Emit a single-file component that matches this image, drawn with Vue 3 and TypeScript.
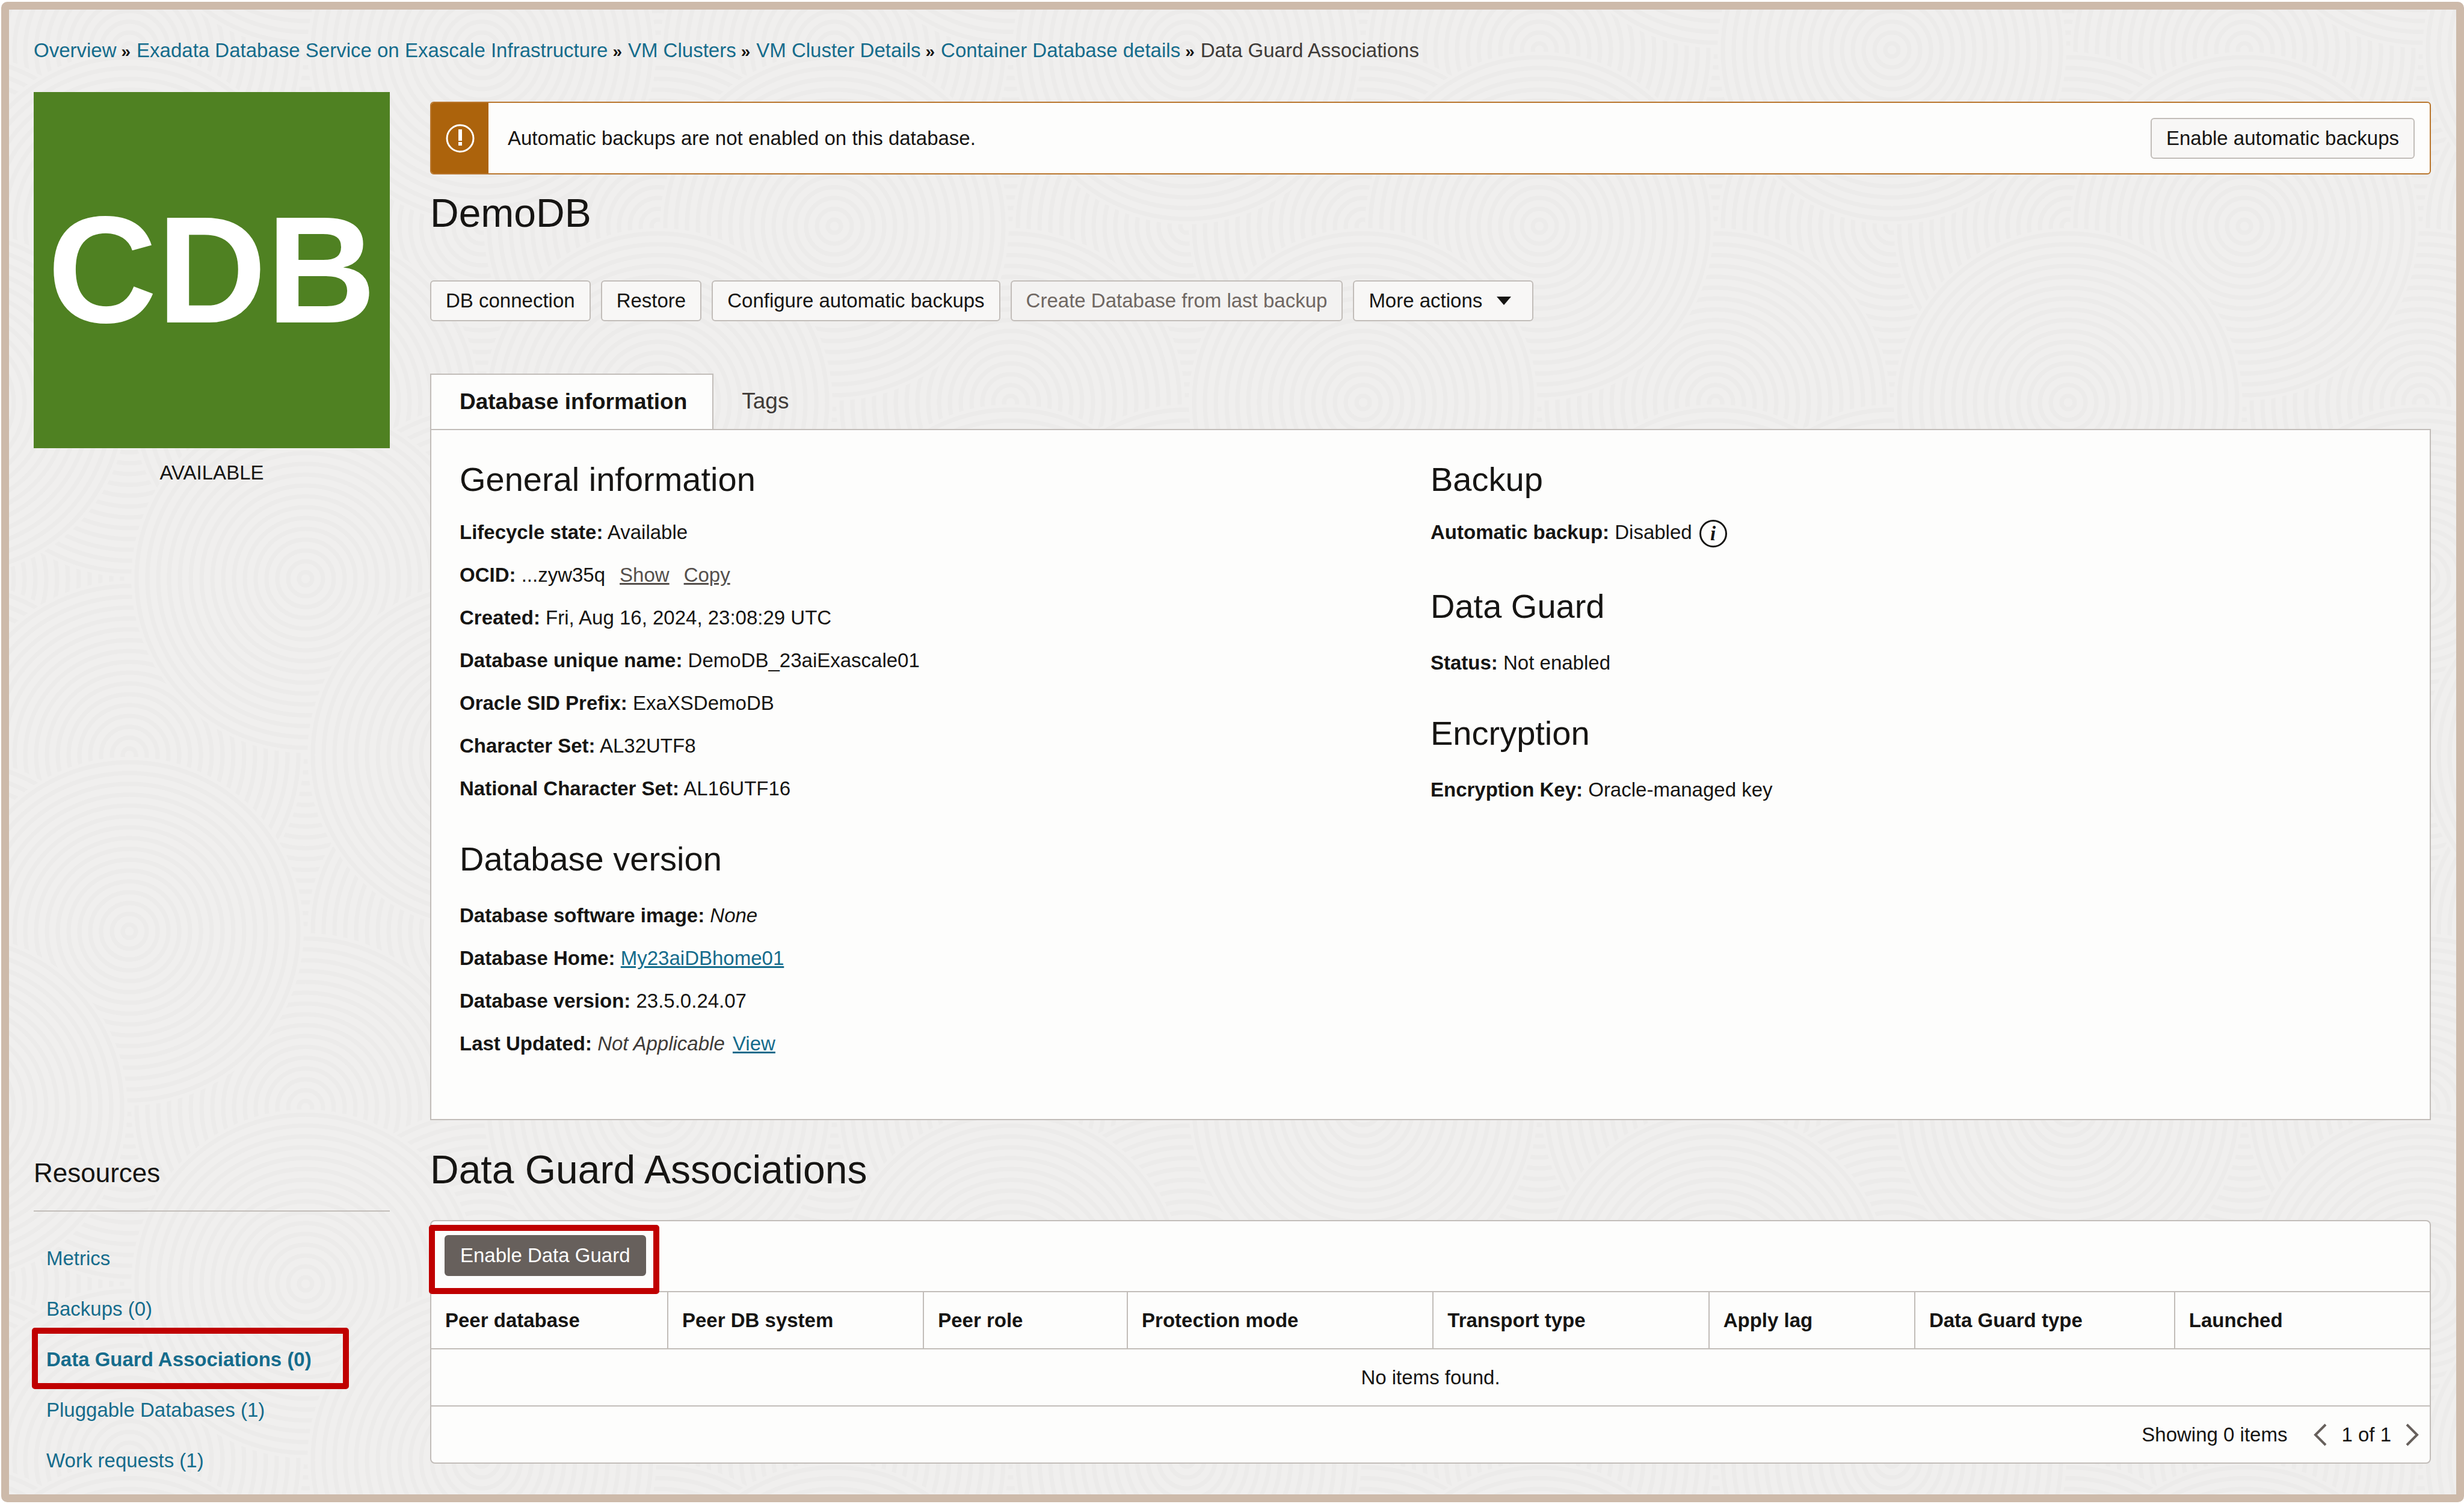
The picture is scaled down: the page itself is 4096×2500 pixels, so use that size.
<script setup lang="ts">
import { ref } from 'vue'

interface Crumb { label: string; current?: boolean }
interface Column { label: string; share: number }
interface Resource { label: string; active?: boolean }
interface Swirl { x: number; y: number }

const crumbs: Crumb[] = [
  { label: 'Overview' },
  { label: 'Exadata Database Service on Exascale Infrastructure' },
  { label: 'VM Clusters' },
  { label: 'VM Cluster Details' },
  { label: 'Container Database details' },
  { label: 'Data Guard Associations', current: true },
]

const activeTab = ref<'info' | 'tags'>('info')

const general = [
  { label: 'Created:', value: 'Fri, Aug 16, 2024, 23:08:29 UTC' },
  { label: 'Database unique name:', value: 'DemoDB_23aiExascale01' },
  { label: 'Oracle SID Prefix:', value: 'ExaXSDemoDB' },
  { label: 'Character Set:', value: 'AL32UTF8' },
  { label: 'National Character Set:', value: 'AL16UTF16' },
]

const columns: Column[] = [
  { label: 'Peer database', share: 11.8 },
  { label: 'Peer DB system', share: 12.8 },
  { label: 'Peer role', share: 10.2 },
  { label: 'Protection mode', share: 15.3 },
  { label: 'Transport type', share: 13.8 },
  { label: 'Apply lag', share: 10.3 },
  { label: 'Data Guard type', share: 13 },
  { label: 'Launched', share: 12.8 },
]

const resources: Resource[] = [
  { label: 'Metrics' },
  { label: 'Backups (0)' },
  { label: 'Data Guard Associations (0)', active: true },
  { label: 'Pluggable Databases (1)' },
  { label: 'Work requests (1)' },
]

// Page texture: a 4 x 4 grid of overlapping ringed discs, repeated as a tile.
const tile = 1172
const pitch = tile / 4
const radius = 290
const rings = Array.from({ length: 16 }, (_, i) => 11 + i * 18)
const paintOrder = [5, 12, 10, 1, 15, 6, 8, 3, 9, 0, 14, 7, 4, 13, 11, 2]
const swirls: Swirl[] = paintOrder.flatMap((cell) => {
  const cx = 200 + (cell % 4) * pitch
  const cy = 67 + Math.floor(cell / 4) * pitch
  const copies: Swirl[] = []
  for (const dx of [-tile, 0, tile]) {
    for (const dy of [-tile, 0, tile]) {
      const x = cx + dx
      const y = cy + dy
      if (x > -radius && x < tile + radius && y > -radius && y < tile + radius) copies.push({ x, y })
    }
  }
  return copies
})
</script>

<template>
  <div class="page">
    <div class="frame">
      <svg class="texture" aria-hidden="true">
        <defs>
          <g id="swirl">
            <circle :r="radius" fill="#f0efee" />
            <circle v-for="r in rings" :key="r" :r="r" fill="none" stroke="#ecebea" stroke-width="7" />
          </g>
          <pattern id="swirls" patternUnits="userSpaceOnUse" :width="tile" :height="tile">
            <use v-for="(s, i) in swirls" :key="i" href="#swirl" :x="s.x" :y="s.y" />
          </pattern>
        </defs>
        <rect width="100%" height="100%" fill="url(#swirls)" />
      </svg>

      <div class="content">
        <nav class="crumbs" aria-label="Breadcrumb">
          <template v-for="(c, i) in crumbs" :key="c.label">
            <span v-if="i > 0" class="sep">»</span>
            <span v-if="c.current" class="here">{{ c.label }}</span>
            <a v-else href="#">{{ c.label }}</a>
          </template>
        </nav>

        <div class="layout">
          <aside class="status">
            <div class="badge">CDB</div>
            <p class="state">AVAILABLE</p>
          </aside>

          <main class="main">
            <div class="alert" role="alert">
              <div class="alert-icon">
                <svg viewBox="0 0 48 48" width="48" height="48" aria-hidden="true">
                  <circle cx="24" cy="24" r="22" fill="none" stroke="#fff" stroke-width="3" />
                  <rect x="21" y="9" width="6" height="19" fill="#fff" />
                  <rect x="21" y="30" width="6" height="6" fill="#fff" />
                </svg>
              </div>
              <p>Automatic backups are not enabled on this database.</p>
              <button type="button" class="btn">Enable automatic backups</button>
            </div>

            <h1>DemoDB</h1>

            <div class="actions">
              <button type="button" class="btn">DB connection</button>
              <button type="button" class="btn">Restore</button>
              <button type="button" class="btn">Configure automatic backups</button>
              <button type="button" class="btn" disabled>Create Database from last backup</button>
              <button type="button" class="btn menu" aria-haspopup="menu">
                More actions
                <svg viewBox="0 0 24 14" width="24" height="14" aria-hidden="true"><path d="M0 0h24L12 14z" fill="#161513" /></svg>
              </button>
            </div>

            <div class="tabs" role="tablist">
              <button type="button" role="tab" :class="{ on: activeTab === 'info' }" :aria-selected="activeTab === 'info'" @click="activeTab = 'info'">Database information</button>
              <button type="button" role="tab" :class="{ on: activeTab === 'tags' }" :aria-selected="activeTab === 'tags'" @click="activeTab = 'tags'">Tags</button>
            </div>

            <section class="panel" role="tabpanel">
              <div class="facts">
                <h3>General information</h3>
                <p><b>Lifecycle state:</b> Available</p>
                <p><b>OCID:</b> ...zyw35q<a class="plain" href="#">Show</a><a class="plain" href="#">Copy</a></p>
                <p v-for="g in general" :key="g.label"><b>{{ g.label }}</b> {{ g.value }}</p>
                <h3>Database version</h3>
                <p><b>Database software image:</b> <i>None</i></p>
                <p><b>Database Home:</b> <a class="under" href="#">My23aiDBhome01</a></p>
                <p><b>Database version:</b> 23.5.0.24.07</p>
                <p><b>Last Updated:</b> <i class="muted">Not Applicable</i> <a class="under view" href="#">View</a></p>
              </div>
              <div class="facts">
                <h3>Backup</h3>
                <p class="with-info"><b>Automatic backup:</b> Disabled<button type="button" class="info" aria-label="About automatic backup">i</button></p>
                <h3>Data Guard</h3>
                <p><b>Status:</b> Not enabled</p>
                <h3>Encryption</h3>
                <p><b>Encryption Key:</b> Oracle-managed key</p>
              </div>
            </section>
          </main>

          <aside class="resources">
            <h2>Resources</h2>
            <ul>
              <li v-for="r in resources" :key="r.label" :class="{ active: r.active }">
                <a href="#">{{ r.label }}</a>
              </li>
            </ul>
          </aside>

          <section class="associations">
            <h2>Data Guard Associations</h2>
            <div class="card">
              <div class="toolbar">
                <div class="marked">
                  <button type="button" class="btn primary">Enable Data Guard</button>
                </div>
              </div>
              <table>
                <colgroup>
                  <col v-for="c in columns" :key="c.label" :style="{ width: c.share + '%' }" />
                </colgroup>
                <thead>
                  <tr><th v-for="c in columns" :key="c.label" scope="col">{{ c.label }}</th></tr>
                </thead>
                <tbody>
                  <tr><td :colspan="columns.length">No items found.</td></tr>
                </tbody>
              </table>
              <div class="pager">
                <span class="count">Showing 0 items</span>
                <button type="button" aria-label="Previous page">
                  <svg viewBox="0 0 22 38" width="22" height="38" aria-hidden="true"><path d="M20 2 3 19l17 17" /></svg>
                </button>
                <span>1 of 1</span>
                <button type="button" aria-label="Next page">
                  <svg viewBox="0 0 22 38" width="22" height="38" aria-hidden="true"><path d="M2 2l17 17L2 36" /></svg>
                </button>
              </div>
            </div>
          </section>
        </div>
      </div>
    </div>
  </div>
</template>

<style>
body {
  background: #fff;
}
</style>

<style scoped>
*,
*::after {
  box-sizing: border-box;
}
.page {
  padding: 3px 0 3px 2px;
  color: #161513;
  font: 33px/40px "Liberation Sans", Arial, sans-serif;
}
.frame {
  position: relative;
  min-height: calc(100vh - 6px);
  border: 13px solid #cdbaaa;
  border-radius: 10px;
  background: #f0efee;
}
.texture {
  position: absolute;
  inset: 0;
  width: 100%;
  height: 100%;
}
.content {
  position: relative;
  padding: 48px 42px 10px 41px;
}
h1,
h2,
h3,
p,
ul {
  margin: 0;
  padding: 0;
  font-weight: 400;
}
a {
  color: #156c8c;
  text-decoration: none;
}
button {
  font: inherit;
  color: inherit;
  cursor: pointer;
}
.crumbs {
  display: flex;
  align-items: baseline;
}
.sep {
  margin: 0 10px 0 8px;
  font-size: 28px;
  font-weight: 700;
}
.here {
  color: #3f3b38;
}
.layout {
  display: grid;
  grid-template-columns: 592px minmax(0, 1fr);
  column-gap: 67px;
  padding-top: 47px;
}
.badge {
  display: flex;
  align-items: center;
  justify-content: center;
  aspect-ratio: 1;
  background: #4f8122;
  color: #fff;
  font-size: 252px;
  font-weight: 700;
  line-height: 1;
}
.state {
  margin-top: 21px;
  text-align: center;
}
.main {
  padding-top: 16px;
}
.alert {
  display: flex;
  align-items: center;
  min-height: 121px;
  padding-right: 25px;
  border: 2px solid #b9762d;
  border-radius: 6px;
  background: #fdfdfc;
  overflow: hidden;
}
.alert-icon {
  display: flex;
  align-items: center;
  justify-content: center;
  align-self: stretch;
  width: 95px;
  background: #ac630c;
}
.alert p {
  flex: 1;
  padding-left: 32px;
}
.btn {
  height: 68px;
  padding: 0 24px;
  border: 2px solid #c2bdb9;
  border-radius: 6px;
  background: #f8f7f6;
  white-space: nowrap;
}
.btn:disabled {
  background: #f3f2f1;
  color: #6f6762;
}
.btn.primary {
  border-color: #67605c;
  background: #67605c;
  color: #fff;
}
.menu {
  display: flex;
  align-items: center;
  gap: 24px;
  padding-right: 35px;
}
h1,
.associations h2 {
  font-size: 66px;
  line-height: 80px;
}
h1 {
  margin-top: 24px;
}
.actions {
  display: flex;
  gap: 17px;
  margin-top: 72px;
}
.tabs {
  display: flex;
  margin-top: 87px;
}
.tabs button {
  height: 92px;
  padding: 0 42px 0 47px;
  border: 0;
  background: none;
  color: #3f3b38;
}
.tabs button,
.tabs .on {
  font-size: 37px;
}
.tabs .on {
  position: relative;
  margin-bottom: -2px;
  border: 2px solid #c2bdb9;
  border-bottom: 0;
  background: #fdfdfc;
  color: #161513;
  font-weight: 700;
}
.panel {
  display: grid;
  grid-template-columns: 1fr 1fr;
  padding: 47px 47px 90px;
  border: 2px solid #c2bdb9;
  background: #fdfdfc;
}
.facts p {
  line-height: 71px;
}
.facts h3 {
  margin: 47px 0 23px;
  font-size: 56px;
  line-height: 70px;
}
.facts h3:first-child {
  margin: 0 0 17px;
}
.facts .plain {
  margin-left: 24px;
  color: #55504c;
  text-decoration: underline;
}
.under {
  text-decoration: underline;
}
.view {
  margin-left: 4px;
}
.muted {
  color: #3f3b38;
}
.with-info {
  padding-bottom: 6px;
}
.info {
  display: inline-flex;
  align-items: center;
  justify-content: center;
  width: 46px;
  height: 46px;
  margin-left: 12px;
  padding: 0;
  border: 3px solid #161513;
  border-radius: 50%;
  background: none;
  font: italic 700 33px/33px "Liberation Serif", serif;
  vertical-align: middle;
}
.resources {
  padding-top: 63px;
}
.resources h2 {
  padding-bottom: 37px;
  border-bottom: 2px solid #c2bdb9;
  font-size: 44px;
  line-height: 50px;
}
.resources ul {
  margin-top: 36px;
  list-style: none;
}
.resources li {
  padding-left: 21px;
  line-height: 84px;
}
.resources .active {
  position: relative;
  font-weight: 700;
}
.resources .active::after,
.marked::after {
  content: "";
  position: absolute;
  border: 10px solid #c00000;
  border-radius: 5px;
  pointer-events: none;
}
.resources .active::after {
  top: -11px;
  left: -3px;
  width: 527px;
  height: 102px;
}
.marked {
  position: relative;
}
.marked::after {
  top: -17px;
  right: -22px;
  bottom: -30px;
  left: -26px;
}
.associations {
  padding-top: 42px;
}
.card {
  margin-top: 44px;
  border: 2px solid #c2bdb9;
  border-radius: 8px;
  background: #fdfdfc;
}
.toolbar {
  display: flex;
  padding: 23px 22px 25px;
}
table {
  width: 100%;
  border-collapse: separate;
  border-spacing: 0;
  table-layout: fixed;
}
th,
td {
  height: 95px;
  padding: 0 23px;
  border-top: 2px solid #c2bdb9;
}
th {
  text-align: left;
}
th + th {
  border-left: 2px solid #c2bdb9;
}
td {
  text-align: center;
}
.pager {
  display: flex;
  align-items: center;
  justify-content: flex-end;
  gap: 24px;
  height: 95px;
  padding-right: 18px;
  border-top: 2px solid #c2bdb9;
}
.count {
  margin-right: 20px;
}
.pager button {
  display: flex;
  padding: 0;
  border: 0;
  background: none;
}
.pager path {
  fill: none;
  stroke: #67605c;
  stroke-width: 4;
}
</style>
